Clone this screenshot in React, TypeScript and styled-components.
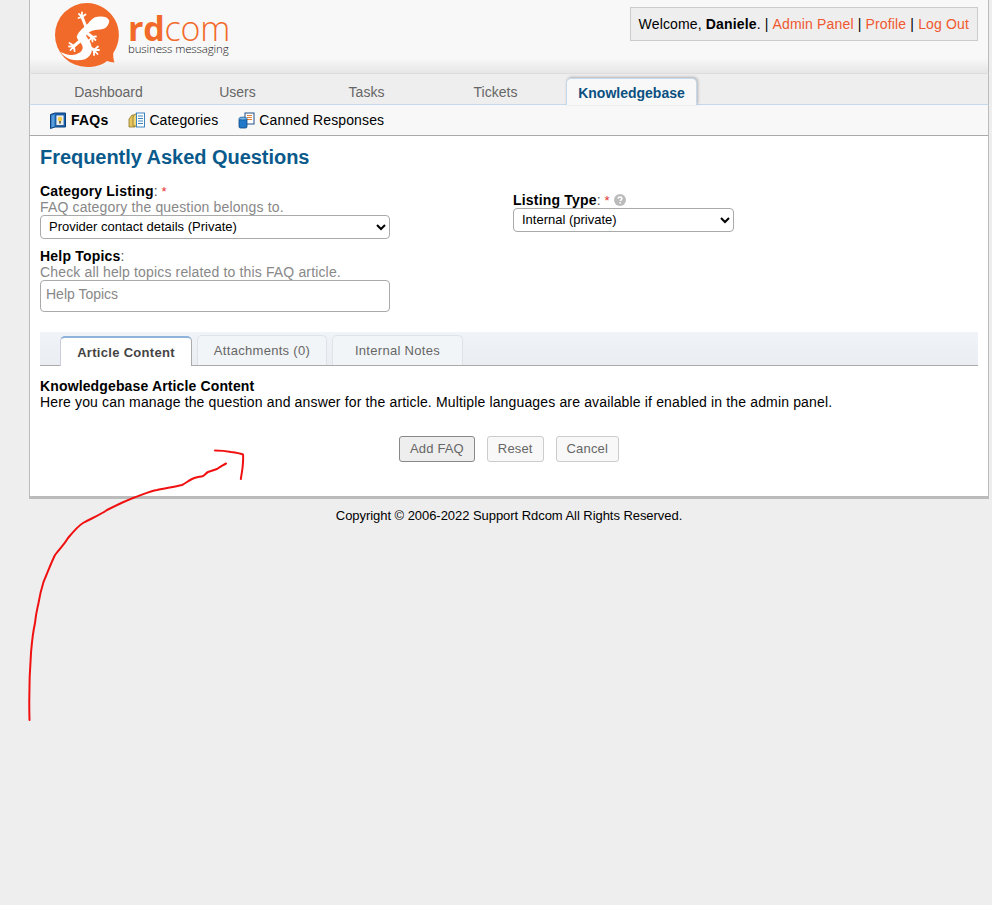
import React from "react";
import styled, { createGlobalStyle } from "styled-components";

const GlobalStyle = createGlobalStyle`
  html, body {
    margin: 0;
    padding: 0;
    background: #eeeeee;
    font-family: "Liberation Sans", Arial, sans-serif;
    font-size: 14px;
    color: #000;
  }
  #root {
    min-height: 905px;
  }
`;

const Logo = () => (
  <LogoMark viewBox="0 0 72 70" aria-hidden="true">
    <path
      d="M36 3a32 32 0 1 0 0 64c8 0 15-2 20-6 2 .5 5 1.500 7.500 1.500-1-3-1.500-6-1.200-9.500A32 32 0 0 0 36 3z"
      fill="#f26a2a"
    />
    <path
      d="M58.300 20.700C57 18 55 17 52.300 16.700C49 16.300 46 16.500 44 17.300C41 18.800 39 21 37.300 23.300C35 25.500 33 27 30.700 29.300C28.500 31.500 26.500 34 25.700 36.700C26 39 27.500 40 29 41.700C30.500 44 32 46 31.700 48.300C31 51 29.500 52.500 27.300 53.300C24.500 54.800 22 55 19 55C15.500 54.500 12 53 9 51.700C12 55 15 58 19 59.300C24 60.500 29 60.500 34 59.300C37.500 57.500 39.800 55 40.700 51.700C41 48 40.500 45 39 41.700C37.500 39 35.500 37.500 35 35C36.500 32.500 40 31 44 30C47.500 29.800 51 29.500 54 28.300C56.500 26.500 58 24 58.300 20.700z"
      fill="#fff"
    />
    <g fill="none" stroke="#fff" strokeLinecap="round" strokeLinejoin="round">
      <path d="M35 27L31 17" strokeWidth="3" />
      <path d="M31 17l-3-3M31 17l0-4.500M31 17l3.500-2.500M31 17l-3.500 1" strokeWidth="1.800" />
      <path d="M36 33l5 4" strokeWidth="3" />
      <path d="M41 37l4-.5M41 37l3.500 3M41 37l.5 4.500M41 37l-2.500 3" strokeWidth="1.800" />
      <path d="M29 41l-6 5" strokeWidth="3" />
      <path d="M23 46l-4.500-3M23 46l-5 .500M23 46l-3.500 4M23 46l.5 5" strokeWidth="1.800" />
      <path d="M38 47l5 3" strokeWidth="3" />
      <path d="M43 50l4-3.500M43 50l5 0M43 50l3.500 4M43 50l0 5" strokeWidth="1.800" />
    </g>
  </LogoMark>
);

const FaqIcon = () => (
  <svg width="16" height="17" viewBox="0 0 16 17" aria-hidden="true">
    <path d="M.5 2.500L5 1h10.500v14H5L.5 16.500z" fill="#1d6fc0" stroke="#0d3f78" strokeWidth="1" />
    <path d="M1.500 3.500L4.500 2.500v12l-3 1z" fill="#5b9bd8" />
    <rect x="6" y="3" width="8" height="10.500" fill="#e9eef4" stroke="#0d3f78" strokeWidth=".7" />
    <circle cx="10" cy="7" r="2.300" fill="#f5cc45" />
    <rect x="9" y="9" width="2" height="2.500" fill="#7d7340" />
  </svg>
);

const CategoriesIcon = () => (
  <svg width="17" height="16" viewBox="0 0 17 16" aria-hidden="true">
    <path d="M1 7l3-4h3v12H1z" fill="#e6c65c" stroke="#8c7426" strokeWidth=".8" />
    <path d="M5 5l2-3h2v12H5z" fill="#f0d778" stroke="#8c7426" strokeWidth=".8" />
    <rect x="8.500" y="1" width="8" height="14" fill="#fff" stroke="#3d83bd" strokeWidth="1" />
    <path d="M10 4h5M10 6.500h5M10 9h5M10 11.500h5" stroke="#3d83bd" strokeWidth="1" />
  </svg>
);

const CannedIcon = () => (
  <svg width="17" height="17" viewBox="0 0 17 17" aria-hidden="true">
    <rect x="7" y="1" width="9" height="11" fill="#fff" stroke="#1f4f86" strokeWidth="1" />
    <path d="M9 3.500h5M9 5.500h5M9 7.500h5" stroke="#e2803a" strokeWidth="1" />
    <rect x="1" y="6" width="8" height="10" rx="1.500" fill="#1f78c8" stroke="#12487f" strokeWidth=".8" />
    <ellipse cx="5" cy="6.500" rx="4" ry="1.500" fill="#6db4ea" stroke="#12487f" strokeWidth=".6" />
  </svg>
);

const HelpIcon = () => (
  <HelpMark viewBox="0 0 12 12" aria-hidden="true">
    <circle cx="6" cy="6" r="6" fill="#bbbbbb" />
    <path
      d="M4.200 4.700c0-1.100.8-1.700 1.900-1.700s1.800.6 1.800 1.500c0 1.300-1.700 1.300-1.700 2.600"
      fill="none"
      stroke="#fff"
      strokeWidth="1.500"
    />
    <rect x="5.400" y="8" width="1.500" height="1.500" fill="#fff" />
  </HelpMark>
);

const navItems = ["Dashboard", "Users", "Tasks", "Tickets", "Knowledgebase"];

const App: React.FC = () => {
  return (
    <>
      <GlobalStyle />
      <Page>
        <Container>
          <Header>
            <LogoWrap>
              <Logo />
              <LogoText>
                <LogoName>
                  <b>rd</b>com
                </LogoName>
                <LogoTag>business messaging</LogoTag>
              </LogoText>
            </LogoWrap>
            <WelcomeBox>
              Welcome, <b>Daniele</b>. | <a>Admin Panel</a> | <a>Profile</a> | <a>Log Out</a>
            </WelcomeBox>
          </Header>

          <Nav>
            {navItems.map((item) => (
              <NavTab key={item} $active={item === "Knowledgebase"}>
                {item}
              </NavTab>
            ))}
          </Nav>

          <SubNav>
            <SubLink $active>
              <FaqIcon />
              FAQs
            </SubLink>
            <SubLink>
              <CategoriesIcon />
              Categories
            </SubLink>
            <SubLink>
              <CannedIcon />
              Canned Responses
            </SubLink>
          </SubNav>

          <Content>
            <Title>Frequently Asked Questions</Title>
            <FormGrid>
              <FormColumn>
                <Field>
                  <Label>
                    <b>Category Listing</b>: <Required>*</Required>
                  </Label>
                  <Hint>FAQ category the question belongs to.</Hint>
                  <Select $width={350} defaultValue="provider">
                    <option value="provider">Provider contact details (Private)</option>
                  </Select>
                </Field>
                <Field>
                  <Label>
                    <b>Help Topics</b>:
                  </Label>
                  <Hint>Check all help topics related to this FAQ article.</Hint>
                  <TopicsInput placeholder="Help Topics" />
                </Field>
              </FormColumn>
              <SideColumn>
                <Label>
                  <b>Listing Type</b>: <Required>*</Required> <HelpIcon />
                </Label>
                <Select $width={221} defaultValue="internal">
                  <option value="internal">Internal (private)</option>
                </Select>
              </SideColumn>
            </FormGrid>

            <ArticleTabs>
              <ArticleTab $active $width={132}>
                Article Content
              </ArticleTab>
              <ArticleTab $width={130}>Attachments (0)</ArticleTab>
              <ArticleTab $width={131}>Internal Notes</ArticleTab>
            </ArticleTabs>

            <ArticleBody>
              <b>Knowledgebase Article Content</b>
              <br />
              Here you can manage the question and answer for the article. Multiple languages are
              available if enabled in the admin panel.
            </ArticleBody>

            <Actions>
              <ActionButton $primary>Add FAQ</ActionButton>
              <ActionButton>Reset</ActionButton>
              <ActionButton>Cancel</ActionButton>
            </Actions>
          </Content>

          <Footer>Copyright © 2006-2022 Support Rdcom All Rights Reserved.</Footer>
        </Container>

        {/* hand drawn annotation on top of the screenshot */}
        <Scribble viewBox="0 0 260 740" aria-hidden="true">
          <path d="M29.500 720C29 700 29.500 673 31 653C32 640 33 632 35 623C36 613 37 610 38.500 603C40 594 41 590 43.500 582C47 574 51 563 55 555C60 548 64 545 68 538C73 532 78 526 83 523C92 518 100 515 107 510C115 506 125 501 133 498C142 495 150 491 157 490C166 488 175 487 182 485C186 483 188 481 192 479C196 477 200 477 203 476C205 475 206 473 208 472C211 471 214 470 217 469C220 467 223 465 226 463.500" />
          <path d="M215 450.500C221 450.500 226 451 231 452C235 452.500 239 453 243 454.500C243.500 459 243 463 242.500 468C242 472 241.500 475 240.800 479" />
        </Scribble>
      </Page>
    </>
  );
};

export default App;

const Page = styled.div`
  position: relative;
  min-height: 905px;
  overflow: hidden;
`;

const Container = styled.div`
  width: 960px;
  margin-left: 29px;
`;

const Header = styled.header`
  height: 73px;
  box-sizing: border-box;
  display: flex;
  justify-content: space-between;
  align-items: flex-start;
  padding: 7px 10px 0 21px;
  background: linear-gradient(to bottom, #f8f8f8 0, #f8f8f8 58px, #e6e6e6 73px);
  border-left: 1px solid #bbb;
  border-right: 1px solid #bbb;
`;

const LogoWrap = styled.div`
  display: flex;
  margin-top: -7px;
`;

const LogoMark = styled.svg`
  width: 72px;
  height: 70px;
  flex: none;
`;

const LogoText = styled.div`
  display: flex;
  flex-direction: column;
  margin-left: 5px;
  padding-top: 13px;
  color: #f26a2a;
`;

const LogoName = styled.div`
  font-family: "Open Sans", sans-serif;
  font-size: 34px;
  font-weight: 300;
  line-height: 30px;
  letter-spacing: -0.200px;

  b {
    font-weight: 700;
  }
`;

const LogoTag = styled.div`
  font-family: "Open Sans", sans-serif;
  font-size: 11.500px;
  font-weight: 300;
  line-height: 12px;
  letter-spacing: -0.140px;
  color: #222;
  white-space: nowrap;
`;

const WelcomeBox = styled.div`
  height: 34px;
  box-sizing: border-box;
  padding: 0 8px;
  display: flex;
  align-items: center;
  white-space: pre;
  letter-spacing: 0.150px;
  background: #eeeeee;
  border: 1px solid #cccccc;

  a {
    color: #f0582f;
  }
`;

const Nav = styled.nav`
  height: 32px;
  box-sizing: border-box;
  display: flex;
  align-items: flex-end;
  padding-left: 14px;
  background: #eeeeee;
  border-top: 1px solid #dddddd;
  border-left: 1px solid #bbb;
  border-right: 1px solid #bbb;
  border-bottom: 1px solid #c5d9ec;
`;

const NavTab = styled.div<{ $active?: boolean }>`
  box-sizing: border-box;
  width: ${({ $active }) => ($active ? "131px" : "129px")};
  height: 27px;
  padding-top: 2px;
  margin-left: ${({ $active }) => ($active ? "6px" : "0")};
  display: flex;
  align-items: center;
  justify-content: center;
  color: ${({ $active }) => ($active ? "#0a4f80" : "#666666")};
  font-weight: ${({ $active }) => ($active ? "bold" : "normal")};
  background: ${({ $active }) => ($active ? "#f8f8f8" : "transparent")};
  margin-bottom: ${({ $active }) => ($active ? "-1px" : "0")};
  ${({ $active }) =>
    $active &&
    `
    border: 1px solid #c5d9ec;
    border-bottom: none;
    border-radius: 5px 5px 0 0;
    box-shadow: 1px -1px 3px rgba(0, 0, 0, 0.25);
  `}
`;

const SubNav = styled.div`
  height: 31px;
  box-sizing: border-box;
  display: flex;
  align-items: center;
  gap: 20px;
  padding-left: 20px;
  background: #f8f8f8;
  border-left: 1px solid #bbb;
  border-right: 1px solid #bbb;
  border-bottom: 1px solid #aaaaaa;
`;

const SubLink = styled.a<{ $active?: boolean }>`
  display: flex;
  align-items: center;
  gap: ${({ $active }) => ($active ? "5px" : "4px")};
  font-weight: ${({ $active }) => ($active ? "bold" : "normal")};
  letter-spacing: ${({ $active }) => ($active ? "0.2px" : "0.120px")};
  color: #000;
`;

const Content = styled.main`
  height: 363px;
  box-sizing: border-box;
  padding: 10px 10px 0;
  background: #fff;
  border-left: 1px solid #bbb;
  border-right: 1px solid #bbb;
  border-bottom: 3px solid #bbbbbb;
`;

const Title = styled.h1`
  margin: 0;
  font-size: 20px;
  line-height: 23px;
  font-weight: bold;
  letter-spacing: -0.040px;
  color: #0a5a8c;
`;

const FormGrid = styled.div`
  display: flex;
  margin-top: 14px;
  height: 129px;
`;

const FormColumn = styled.div`
  width: 473px;
  display: flex;
  flex-direction: column;
  gap: 9px;
`;

const SideColumn = styled.div`
  display: flex;
  flex-direction: column;
  padding-top: 9px;
`;

const Field = styled.div`
  display: flex;
  flex-direction: column;
`;

const Label = styled.div`
  height: 16px;
  line-height: 16px;
  color: #555;

  b {
    color: #000;
    letter-spacing: 0.2px;
  }
`;

const Required = styled.span`
  color: #e83030;
  font-size: 13px;
`;

const HelpMark = styled.svg`
  width: 12px;
  height: 12px;
  vertical-align: -1px;
`;

const Hint = styled.div`
  height: 16px;
  line-height: 16px;
  color: #888888;
  letter-spacing: 0.150px;
`;

const Select = styled.select<{ $width: number }>`
  width: ${({ $width }) => $width}px;
  height: 24px;
  box-sizing: border-box;
  padding: 0 4px 2px;
  background: #fff;
  border: 1px solid #aaaaaa;
  border-radius: 4px;
  font-family: inherit;
  font-size: 13px;
  color: #000;
`;

const TopicsInput = styled.input`
  width: 350px;
  height: 32px;
  box-sizing: border-box;
  padding: 0 5px 4px;
  background: #fff;
  border: 1px solid #aaaaaa;
  border-radius: 4px;
  font-family: inherit;
  font-size: 14px;

  &::placeholder {
    color: #888888;
    opacity: 1;
  }
`;

const ArticleTabs = styled.div`
  display: flex;
  align-items: flex-end;
  gap: 5px;
  height: 34px;
  box-sizing: border-box;
  margin-top: 20px;
  padding-left: 20px;
  background: linear-gradient(to bottom, #f0f4f8, #eaeef2);
  border-bottom: 1px solid #aaaaaa;
`;

const ArticleTab = styled.div<{ $active?: boolean; $width: number }>`
  box-sizing: border-box;
  width: ${({ $width }) => $width}px;
  height: 30px;
  display: flex;
  align-items: center;
  justify-content: center;
  letter-spacing: 0.300px;
  font-size: 13px;
  color: ${({ $active }) => ($active ? "#444444" : "#666666")};
  font-weight: ${({ $active }) => ($active ? "bold" : "normal")};
  background: ${({ $active }) => ($active ? "#ffffff" : "#f2f5f8")};
  border: 1px solid #dde3e9;
  border-bottom: none;
  border-radius: 5px 5px 0 0;
  ${({ $active }) =>
    $active &&
    `
    border-top: 2px solid #8fb4dc;
    border-color: #8fb4dc #aaa transparent #ccd;
    margin-bottom: -1px;
    padding-top: 1px;
  `}
`;

const ArticleBody = styled.div`
  margin-top: 12px;
  line-height: 16px;
  letter-spacing: 0.150px;

  b {
    letter-spacing: 0.140px;
  }
`;

const Actions = styled.div`
  display: flex;
  justify-content: center;
  gap: 12px;
  margin-top: 26px;
`;

const ActionButton = styled.button<{ $primary?: boolean }>`
  height: 26px;
  box-sizing: border-box;
  padding: 0 10px 2px;
  font-family: inherit;
  font-size: 13px;
  letter-spacing: 0.150px;
  color: #666666;
  background: ${({ $primary }) => ($primary ? "#eeeeee" : "#f8f8f8")};
  border: 1px solid ${({ $primary }) => ($primary ? "#888888" : "#cccccc")};
  border-radius: 3px;
`;

const Footer = styled.footer`
  margin-top: 9px;
  text-align: center;
  font-size: 13px;
  line-height: 16px;
  letter-spacing: -0.050px;
`;

const Scribble = styled.svg`
  position: absolute;
  top: 0;
  left: 0;
  width: 260px;
  height: 740px;

  path {
    fill: none;
    stroke: #f01010;
    stroke-width: 2;
    stroke-linecap: round;
    stroke-linejoin: round;
  }
`;
